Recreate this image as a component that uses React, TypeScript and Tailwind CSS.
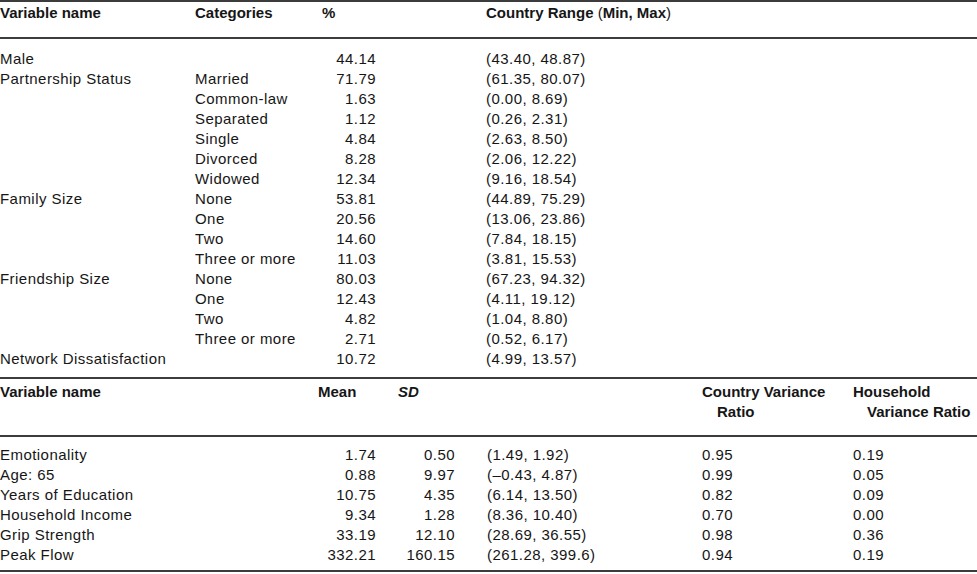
import React from "react";

const top = [
  ["Male", "", "44.14", "(43.40, 48.87)"],
  ["Partnership Status", "Married", "71.79", "(61.35, 80.07)"],
  ["", "Common-law", "1.63", "(0.00, 8.69)"],
  ["", "Separated", "1.12", "(0.26, 2.31)"],
  ["", "Single", "4.84", "(2.63, 8.50)"],
  ["", "Divorced", "8.28", "(2.06, 12.22)"],
  ["", "Widowed", "12.34", "(9.16, 18.54)"],
  ["Family Size", "None", "53.81", "(44.89, 75.29)"],
  ["", "One", "20.56", "(13.06, 23.86)"],
  ["", "Two", "14.60", "(7.84, 18.15)"],
  ["", "Three or more", "11.03", "(3.81, 15.53)"],
  ["Friendship Size", "None", "80.03", "(67.23, 94.32)"],
  ["", "One", "12.43", "(4.11, 19.12)"],
  ["", "Two", "4.82", "(1.04, 8.80)"],
  ["", "Three or more", "2.71", "(0.52, 6.17)"],
  ["Network Dissatisfaction", "", "10.72", "(4.99, 13.57)"],
];

const bottom = [
  ["Emotionality", "1.74", "0.50", "(1.49, 1.92)", "0.95", "0.19"],
  ["Age: 65", "0.88", "9.97", "(\u20130.43, 4.87)", "0.99", "0.05"],
  ["Years of Education", "10.75", "4.35", "(6.14, 13.50)", "0.82", "0.09"],
  ["Household Income", "9.34", "1.28", "(8.36, 10.40)", "0.70", "0.00"],
  ["Grip Strength", "33.19", "12.10", "(28.69, 36.55)", "0.98", "0.36"],
  ["Peak Flow", "332.21", "160.15", "(261.28, 399.6)", "0.94", "0.19"],
];

function Rule() {
  return <div className="h-[2px] w-full bg-[#3c3c3c]" />;
}

export default function App() {
  return (
    <div
      className="w-[977px] h-[574px] bg-white text-[#161616] text-[15px] leading-[20px] overflow-hidden"
      style={{ fontFamily: '"Liberation Sans", Arial, sans-serif' }}
    >
      <Rule />
      <div className="grid grid-cols-[195px_127px_54px_1fr] pt-[1px] h-[35px] font-bold">
        <div>Variable name</div>
        <div>Categories</div>
        <div>%</div>
        <div className="pl-[110px]">
          Country Range <span className="font-normal">(</span>Min, Max
          <span className="font-normal">)</span>
        </div>
      </div>
      <Rule />
      <div className="pt-[10px] pb-[8px] tracking-[0.45px]">
        {top.map((r, i) => (
          <div key={i} className="grid grid-cols-[195px_127px_54px_1fr] h-[20px]">
            <div className="whitespace-nowrap">{r[0]}</div>
            <div className="whitespace-nowrap">{r[1]}</div>
            <div className="text-right">{r[2]}</div>
            <div className="pl-[110px] whitespace-nowrap">{r[3]}</div>
          </div>
        ))}
      </div>
      <Rule />
      <div className="grid grid-cols-[318px_58px_79px_247px_151px_1fr] pt-[3px] h-[56px] font-bold">
        <div>Variable name</div>
        <div>Mean</div>
        <div className="pl-[22px] italic">SD</div>
        <div />
        <div className="whitespace-nowrap">
          <div>Country Variance</div>
          <div className="pl-[15px]">Ratio</div>
        </div>
        <div className="whitespace-nowrap">
          <div>Household</div>
          <div className="pl-[14px]">Variance Ratio</div>
        </div>
      </div>
      <Rule />
      <div className="pt-[8px] pb-[5px] tracking-[0.45px]">
        {bottom.map((r, i) => (
          <div key={i} className="grid grid-cols-[318px_58px_79px_247px_151px_1fr] h-[20px]">
            <div className="whitespace-nowrap">{r[0]}</div>
            <div className="text-right">{r[1]}</div>
            <div className="text-right">{r[2]}</div>
            <div className="pl-[32px] whitespace-nowrap">{r[3]}</div>
            <div>{r[4]}</div>
            <div>{r[5]}</div>
          </div>
        ))}
      </div>
      <Rule />
    </div>
  );
}
